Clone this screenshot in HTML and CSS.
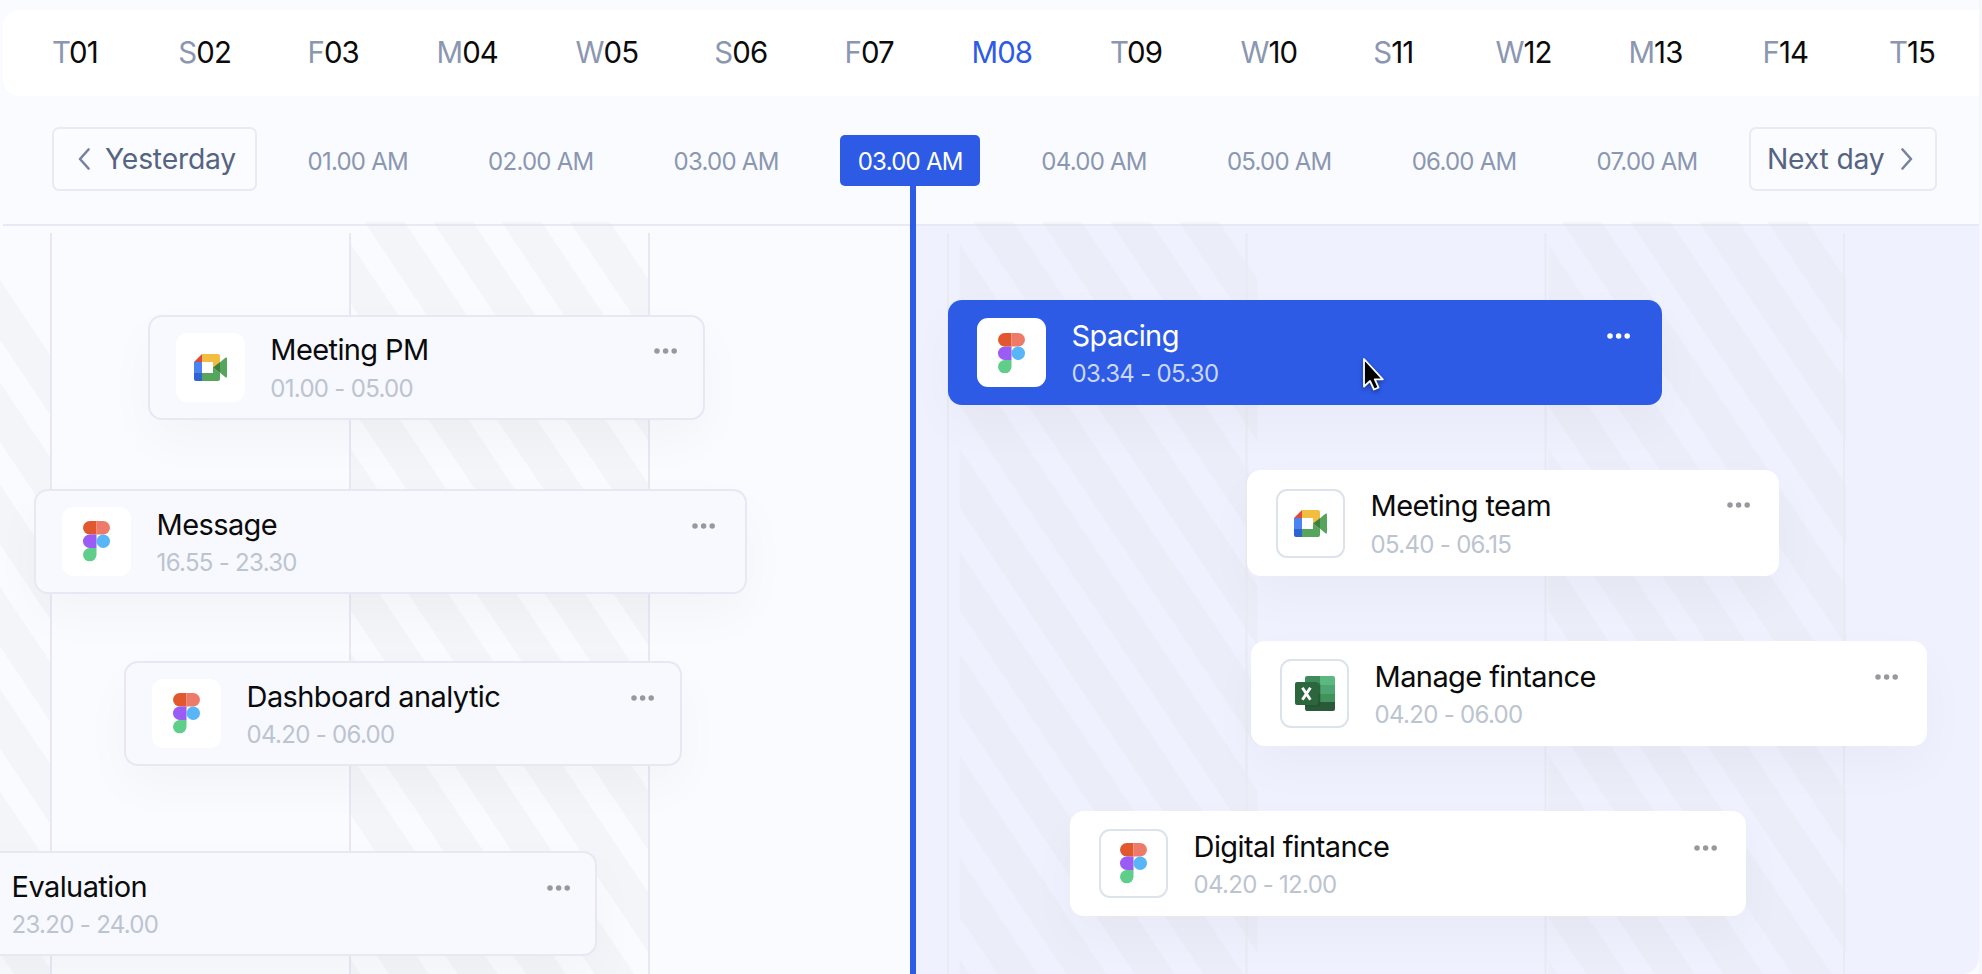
FILE: index.html
```html
<!DOCTYPE html>
<html lang="en">
<head>
<meta charset="utf-8">
<title>Schedule</title>
<link rel="stylesheet" href="styles.css">
</head>
<body>
<svg class="sprite" aria-hidden="true">
  <symbol id="figma" viewBox="0 0 27 40.5">
    <path d="M6.75 0H13.5V13.5H6.75A6.75 6.75 0 0 1 6.75 0Z" fill="#e2582e"/>
    <path d="M13.5 0H20.25A6.75 6.75 0 0 1 20.25 13.5H13.5Z" fill="#ee7b69"/>
    <path d="M6.75 13.5H13.5V27H6.75A6.75 6.75 0 0 1 6.75 13.5Z" fill="#9a5cf5"/>
    <circle cx="20.25" cy="20.25" r="6.75" fill="#58b6f8"/>
    <path d="M6.75 27H13.5V33.75A6.75 6.75 0 1 1 6.75 27Z" fill="#5fce8b"/>
  </symbol>
  <symbol id="meet" viewBox="0 0 33 27">
    <path d="M0 8H8V19H0Z" fill="#4b84f0"/>
    <path d="M0 19H8V27H2A2 2 0 0 1 0 25Z" fill="#2f63cf"/>
    <path d="M8 0V8H0Z" fill="#dc4a3d"/>
    <path d="M8 0H24A2 2 0 0 1 26 2V8.500L19 14V8H8Z" fill="#f3bd42"/>
    <path d="M8 19H19V13.500L26 19V25A2 2 0 0 1 24 27H8Z" fill="#55a65c"/>
    <path d="M26 8.200L31.400 3.800Q33 2.800 33 4.500V22.500Q33 24.200 31.400 23.200L26 18.800Z" fill="#55a65c"/>
    <path d="M19 13.500L26 8V19Z" fill="#3c7f3f"/>
  </symbol>
  <symbol id="excel" viewBox="0 0 40 35">
    <path d="M12 0H25V9H10V2A2 2 0 0 1 12 0Z" fill="#418a5b"/>
    <path d="M25 0H38A2 2 0 0 1 40 2V9H25Z" fill="#5bb980"/>
    <path d="M10 9H25V18H10Z" fill="#34794d"/>
    <path d="M25 9H40V18H25Z" fill="#4fa571"/>
    <path d="M10 18H25V26H10Z" fill="#2c6640"/>
    <path d="M25 18H40V26H25Z" fill="#42935b"/>
    <path d="M10 26H40V33A2 2 0 0 1 38 35H12A2 2 0 0 1 10 33Z" fill="#2b5a3a"/>
    <path d="M10 7H24Q25.500 7 25.500 9V28Q25.500 31 22.500 31H10Z" fill="#1f4d30" opacity=".45"/>
    <rect x="0" y="6" width="23" height="23" rx="2" fill="#2b663d"/>
    <path d="M7.400 11.800L15.400 23.800M15.400 11.800L7.400 23.800" stroke="#fff" stroke-width="2.900" fill="none"/>
  </symbol>
  <symbol id="dots" viewBox="0 0 24 6">
    <circle cx="3" cy="3" r="2.750"/><circle cx="11.600" cy="3" r="2.750"/><circle cx="20.200" cy="3" r="2.750"/>
  </symbol>
</svg>

<div class="scheduler">
  <nav class="days">
    <span class="day">T<b>01</b></span>
    <span class="day">S<b>02</b></span>
    <span class="day">F<b>03</b></span>
    <span class="day">M<b>04</b></span>
    <span class="day">W<b>05</b></span>
    <span class="day">S<b>06</b></span>
    <span class="day">F<b>07</b></span>
    <span class="day day--current">M<b>08</b></span>
    <span class="day">T<b>09</b></span>
    <span class="day">W<b>10</b></span>
    <span class="day">S<b>11</b></span>
    <span class="day">W<b>12</b></span>
    <span class="day">M<b>13</b></span>
    <span class="day">F<b>14</b></span>
    <span class="day">T<b>15</b></span>
  </nav>

  <div class="hours">
    <button class="step step--prev"><svg class="chevron" viewBox="0 0 12 22"><path d="M10.500 1.500L2 11L10.500 20.500"/></svg>Yesterday</button>
    <div class="ticks">
      <span class="tick">01.00 AM</span>
      <span class="tick">02.00 AM</span>
      <span class="tick">03.00 AM</span>
      <span class="tick tick--now">03.00 AM</span>
      <span class="tick">04.00 AM</span>
      <span class="tick">05.00 AM</span>
      <span class="tick">06.00 AM</span>
      <span class="tick">07.00 AM</span>
    </div>
    <button class="step step--next">Next day<svg class="chevron" viewBox="0 0 12 22"><path d="M1.500 1.500L10 11L1.500 20.500"/></svg></button>
  </div>

  <main class="board">
    <svg class="backdrop" viewBox="0 222 1982 752" width="1982" height="752" aria-hidden="true">
      <defs>
        <pattern id="stripeA" width="68.5" height="1200" patternUnits="userSpaceOnUse" patternTransform="translate(-78.9 222) skewX(33.820)"><rect width="40" height="1200" fill="#dfe2e6"/></pattern>
        <pattern id="stripeB" width="68.5" height="1200" patternUnits="userSpaceOnUse" patternTransform="translate(364.5 222) skewX(33.820)"><rect width="40" height="1200" fill="#dfe2e6"/></pattern>
        <pattern id="stripeC" width="68.5" height="1200" patternUnits="userSpaceOnUse" patternTransform="translate(973.500 222) skewX(33.820)"><rect width="40" height="1200" fill="#dfe2e6"/></pattern>
        <pattern id="stripeD" width="68.5" height="1200" patternUnits="userSpaceOnUse" patternTransform="translate(1562 222) skewX(33.820)"><rect width="40" height="1200" fill="#dfe2e6"/></pattern>
      </defs>
      <path class="zone" d="M913 226H1979V954Q1979 974 1961 974H913Z"/>
      <path class="rule" d="M3 225H1979"/>
      <g class="stripes">
        <path d="M0 270L51 346V974H0Z" fill="url(#stripeA)"/>
        <path d="M351 222H632L649 247V974H351Z" fill="url(#stripeB)"/>
        <path d="M959.5 222H1240.500L1257.500 247V974H959.500Z" fill="url(#stripeC)"/>
        <path d="M1548.5 222H1829.500L1846.500 247V974H1548.500Z" fill="url(#stripeD)"/>
      </g>
      <path class="column" d="M51 233V974M350 233V974M649 233V974"/>
      <path class="column column--soft" d="M948 233V974M1246.500 233V974M1545.500 233V974M1844 233V974"/>
    </svg>

    <section class="lane lane--past">
      <article class="task task--pm">
        <span class="app"><svg class="app__meet"><use href="#meet"/></svg></span>
        <div class="task__text"><h3>Meeting PM</h3><p>01.00 - 05.00</p></div>
        <svg class="more"><use href="#dots"/></svg>
      </article>
      <article class="task task--message">
        <span class="app"><svg class="app__figma"><use href="#figma"/></svg></span>
        <div class="task__text"><h3>Message</h3><p>16.55 - 23.30</p></div>
        <svg class="more"><use href="#dots"/></svg>
      </article>
      <article class="task task--dashboard">
        <span class="app"><svg class="app__figma"><use href="#figma"/></svg></span>
        <div class="task__text"><h3>Dashboard analytic</h3><p>04.20 - 06.00</p></div>
        <svg class="more"><use href="#dots"/></svg>
      </article>
      <article class="task task--evaluation">
        <span class="app"></span>
        <div class="task__text"><h3>Evaluation</h3><p>23.20 - 24.00</p></div>
        <svg class="more"><use href="#dots"/></svg>
      </article>
    </section>

    <section class="lane lane--next">
      <article class="task task--spacing">
        <span class="app"><svg class="app__figma"><use href="#figma"/></svg></span>
        <div class="task__text"><h3>Spacing</h3><p>03.34 - 05.30</p></div>
        <svg class="more"><use href="#dots"/></svg>
      </article>
      <article class="task task--team">
        <span class="app"><svg class="app__meet"><use href="#meet"/></svg></span>
        <div class="task__text"><h3>Meeting team</h3><p>05.40 - 06.15</p></div>
        <svg class="more"><use href="#dots"/></svg>
      </article>
      <article class="task task--manage">
        <span class="app"><svg class="app__excel"><use href="#excel"/></svg></span>
        <div class="task__text"><h3>Manage fintance</h3><p>04.20 - 06.00</p></div>
        <svg class="more"><use href="#dots"/></svg>
      </article>
      <article class="task task--digital">
        <span class="app"><svg class="app__figma"><use href="#figma"/></svg></span>
        <div class="task__text"><h3>Digital fintance</h3><p>04.20 - 12.00</p></div>
        <svg class="more"><use href="#dots"/></svg>
      </article>
    </section>
  </main>

  <div class="now-line"></div>
  <svg class="cursor" viewBox="0 0 24 36"><path d="M2 2V29.500L8 24L12 32.500L16.500 30.500L12.800 22.300H20.800Z" fill="#000" stroke="#fff" stroke-width="1.800" stroke-linejoin="round"/></svg>
</div>
</body>
</html>
```

FILE: styles.css
```css
* {
  box-sizing: border-box;
}

body {
  margin: 0;
  background: #fafbff;
  font-family: Inter, "Liberation Sans", sans-serif;
  color: #0b0b0c;
}

.sprite {
  display: none;
}

.scheduler {
  position: relative;
  width: 1982px;
  height: 974px;
  overflow: hidden;
  padding: 10px 3px 0;
  background: linear-gradient(to right, #fafbff 1979px, #f6f7fa 1979px);
}

/* Day strip */
.days {
  display: grid;
  grid-template-columns: 126.3px 129.2px 129px 139px 138.8px 130.2px 127px 138.5px 130.5px 132.8px 122.2px 133px 134px 126.5px 1fr;
  align-items: center;
  height: 85.5px;
  padding: 0 0 1px 49px;
  border-radius: 16px 0 0 16px;
  background: #fff;
  font-size: 29.4px;
  letter-spacing: -0.9px;
}

.day {
  color: #8b97b1;
}

.day b {
  font-weight: 400;
  color: #0b0b0c;
}

.day--current,
.day--current b {
  color: #2d5be6;
}

/* Hour strip */
.hours {
  display: flex;
  align-items: center;
  justify-content: space-between;
  height: 126.5px;
  padding: 1px 42px 0 49px;
}

.step {
  display: flex;
  align-items: center;
  height: 64px;
  margin: 0;
  border: 2px solid #e8ebf4;
  border-radius: 7px;
  background: #fbfcff;
  font: 400 28.3px/36px Inter, "Liberation Sans", sans-serif;
  letter-spacing: -0.2px;
  color: #56657f;
}

.step--prev {
  width: 205px;
  padding: 0 0 0 24px;
  gap: 15px;
}

.step--next {
  width: 188px;
  padding: 0 0 0 16px;
  gap: 16px;
}

.chevron {
  width: 12px;
  height: 22px;
  fill: none;
  stroke: #7683a0;
  stroke-width: 2.6;
  stroke-linecap: round;
  stroke-linejoin: round;
}

.ticks {
  display: flex;
  flex: 1;
  align-items: center;
  justify-content: space-between;
  padding: 2px 51.5px 0 50.5px;
  font-size: 24px;
  letter-spacing: -0.75px;
  color: #8b97b1;
}

.tick {
  padding-top: 2px;
}

.tick--now {
  margin: 0 -19px;
  padding: 2px 17.5px 0 18px;
  border-radius: 5px;
  background: #2d5be6;
  line-height: 49px;
  color: #fff;
}

.now-line {
  position: absolute;
  top: 184px;
  bottom: 0;
  left: 910.3px;
  width: 5.7px;
  background: #2d5be6;
}

/* Board */
.board {
  position: relative;
  display: grid;
  grid-template-columns: 910px 1fr;
  height: 752px;
}

.backdrop {
  position: absolute;
  top: 0;
  left: -3px;
}

.zone {
  fill: #eff1fe;
}

.stripes {
  opacity: 0.24;
}

.rule {
  stroke: #e7e9f3;
  stroke-width: 2;
}

.column {
  stroke: #e6e8f3;
  stroke-width: 2;
}

.column--soft {
  stroke: #e8ebf2;
}

.lane {
  position: relative;
  display: flex;
  flex-direction: column;
}

.lane--past {
  padding-top: 92.5px;
}

.lane--next {
  gap: 65px;
  padding-top: 78px;
}

.task {
  display: flex;
  flex: none;
  align-items: flex-start;
  height: 105.3px;
  padding: 18.3px 28px 0 29.3px;
  border-radius: 14px;
  background: #fff;
  box-shadow: 0 20px 50px rgba(30, 35, 40, 0.03);
}

.lane--past .task {
  padding: 16.3px 24.5px 0 26.3px;
  border: 2px solid #e4e9f3;
  background: #f7f9fe;
}

.task--pm {
  width: 557px;
  margin-left: 144.7px;
}

.task--message {
  width: 713px;
  margin: 69px 0 0 31px;
}

.task--dashboard {
  width: 557.5px;
  margin: 66.7px 0 0 121px;
}

.task--evaluation {
  width: 708px;
  margin: 84.7px 0 0 -114px;
}

.lane--next .task--spacing {
  width: 714px;
  margin-left: 35px;
  padding-right: 31px;
  background: #2d5be6;
}

.task--team {
  width: 531.5px;
  margin-left: 334px;
}

.task--manage {
  width: 675.5px;
  margin-left: 338px;
}

.task--digital {
  width: 675.5px;
  margin-left: 157px;
}

.app {
  display: flex;
  flex: none;
  align-items: center;
  justify-content: center;
  width: 69px;
  height: 69px;
  border-radius: 11px;
  background: #fff;
}

.lane--next .app {
  border: 2px solid #dce3ec;
}

.lane--next .task--spacing .app {
  border: 0;
}

.app__figma {
  width: 27px;
  height: 40.5px;
}

.app__meet {
  width: 33px;
  height: 27px;
}

.app__excel {
  width: 40px;
  height: 35px;
}

.task__text {
  flex: 1;
  margin-top: -0.4px;
  padding-left: 25.3px;
}

.task__text h3,
.task__text p {
  margin: 0;
  font-weight: 400;
  white-space: nowrap;
}

.task__text h3 {
  font-size: 29px;
  line-height: 36px;
  letter-spacing: -0.6px;
}

.task__text p {
  margin-top: 2.4px;
  font-size: 24px;
  line-height: 36px;
  letter-spacing: -0.7px;
  color: #bcc4d0;
}

.task--spacing h3 {
  color: #fff;
}

.task--spacing p {
  color: #cbd7f7;
}

.more {
  flex: none;
  width: 24px;
  height: 6px;
  margin-top: 15.5px;
  fill: #97999f;
}

.task--message .more {
  margin-right: 4.5px;
}

.task--team .more {
  margin-top: 13.5px;
}

.task--spacing .more {
  margin-top: 15px;
  fill: #fff;
}

.cursor {
  position: absolute;
  left: 1361.5px;
  top: 356.5px;
  width: 24px;
  height: 36px;
  filter: drop-shadow(0 2px 2px rgba(0, 0, 0, 0.4));
}
```
